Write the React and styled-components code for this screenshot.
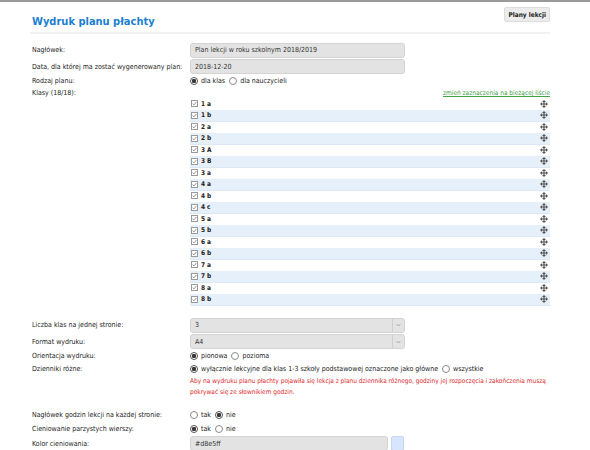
import React from 'react';
import styled, { createGlobalStyle } from 'styled-components';

const GlobalStyle = createGlobalStyle`
  html, body {
    margin: 0;
    padding: 0;
    background: #fff;
  }
  body {
    border-top: 2px solid #9a9a9a;
    font-family: "DejaVu Sans Condensed", "DejaVu Sans", sans-serif;
    font-size: 7px;
    color: #222;
  }
`;

const Page = styled.div`
  width: 520px;
  padding: 0 0 0 30px;
  box-sizing: content-box;
`;

const Header = styled.div`
  display: flex;
  justify-content: space-between;
  align-items: flex-start;
  height: 30px;
  border-bottom: 2px solid #f1f1f1;
  padding: 0 0 0 2px;
`;

const Title = styled.h1`
  margin: 13px 0 0;
  font-size: 11px;
  font-weight: bold;
  color: #1b7fd2;
`;

const TopButton = styled.button`
  margin-top: 5px;
  height: 15px;
  padding: 0 3px;
  background: #ececec;
  border: 1px solid #dcdcdc;
  border-radius: 2px;
  font-family: inherit;
  font-size: 6.5px;
  font-weight: bold;
  color: #222;
`;

const Form = styled.div`
  padding: 8px 0 0 2px;
`;

const Row = styled.div`
  display: grid;
  grid-template-columns: 158px 1fr;
  align-items: ${p => (p.top ? 'start' : 'center')};
  height: ${p => p.h}px;
  margin-top: ${p => p.mt || 0}px;
`;

const Label = styled.div`
  font-size: 7px;
  line-height: ${p => p.lh || 12}px;
`;

const Field = styled.div`
  display: flex;
  align-items: center;
  gap: 3px;
`;

const TextInput = styled.div`
  box-sizing: border-box;
  width: ${p => p.w || 215}px;
  height: 15px;
  padding: 0 4px;
  display: flex;
  align-items: center;
  background: #e3e3e3;
  border: 1px solid #d3d3d3;
  border-radius: 3px;
  font-size: 7px;
  color: #333;
`;

const Select = styled(TextInput)`
  padding-right: 0;
  justify-content: space-between;
`;

const SelectArrow = styled.div`
  width: 11px;
  height: 100%;
  border-left: 1px solid #cfcfcf;
  display: flex;
  align-items: center;
  justify-content: center;
`;

const Swatch = styled.div`
  width: 13px;
  height: 15px;
  box-sizing: border-box;
  background: #d8e5ff;
  border: 1px solid #c9d5ea;
  border-radius: 2px;
`;

const Radios = styled.div`
  display: flex;
  align-items: center;
  gap: 3px;
  height: ${p => p.h || 'auto'};
  font-size: 7px;
`;

const RadioItem = styled.span`
  display: inline-flex;
  align-items: center;
  gap: 3px;
  margin-right: 1px;
`;

const RadioDot = styled.span`
  box-sizing: border-box;
  width: 8px;
  height: 8px;
  border-radius: 50%;
  border: 1px solid ${p => (p.checked ? '#555' : '#8a8a8a')};
  background: ${p => (p.checked ? 'radial-gradient(circle, #3a3a3a 0 2px, #fff 2.4px)' : '#fff')};
`;

const ClassBox = styled.div`
  display: flex;
  flex-direction: column;
`;

const LinkLine = styled.div`
  height: 11px;
  display: flex;
  justify-content: flex-end;
  align-items: center;
`;

const GreenLink = styled.a`
  color: #43a047;
  text-decoration: underline;
  font-size: 6.5px;
`;

const ClassRow = styled.div`
  box-sizing: border-box;
  height: 11.5px;
  display: flex;
  align-items: center;
  justify-content: space-between;
  padding: 0 2px 0 1px;
  background: ${p => (p.odd ? '#e6f0fa' : '#fff')};
  border-bottom: 1px solid ${p => (p.odd ? '#dce8f5' : '#fff')};
  font-weight: bold;
  font-size: 6.5px;
`;

const ClassName = styled.span`
  display: flex;
  align-items: center;
  gap: 3px;
`;

const RedNote = styled.div`
  color: #e0262b;
  font-size: 6.5px;
  line-height: 11px;
  margin-top: 1px;
`;

const Radio = ({ checked, children }) => (
  <RadioItem>
    <RadioDot checked={checked} />
    {children}
  </RadioItem>
);

const CheckIcon = () => (
  <svg width="7" height="7" viewBox="0 0 7 7">
    <rect x="0.5" y="0.5" width="6" height="6" fill="#fff" stroke="#9a9a9a" />
    <path d="M1.6 3.6 L2.9 4.9 L5.4 2" fill="none" stroke="#7a7a7a" strokeWidth="0.8" />
  </svg>
);

const MoveIcon = () => (
  <svg width="8" height="8" viewBox="0 0 16 16">
    <path
      fill="#555"
      d="M8 0 L12 4.2 H9.2 V6.8 H11.8 V4 L16 8 L11.8 12 V9.2 H9.2 V11.8 H12 L8 16 L4 11.8 H6.8 V9.2 H4.2 V12 L0 8 L4.2 4 V6.8 H6.8 V4.2 H4 Z"
    />
  </svg>
);

const Chevron = () => (
  <svg width="5" height="4" viewBox="0 0 5 4">
    <path d="M0.6 1 L2.5 3 L4.4 1" fill="none" stroke="#999" strokeWidth="0.8" />
  </svg>
);

const classes = [
  '1 a', '1 b', '2 a', '2 b', '3 A', '3 B', '3 a', '4 a', '4 b',
  '4 c', '5 a', '5 b', '6 a', '6 b', '7 a', '7 b', '8 a', '8 b',
];

export default function App() {
  return (
    <>
      <GlobalStyle />
      <Page>
        <Header>
          <Title>Wydruk planu płachty</Title>
          <TopButton>Plany lekcji</TopButton>
        </Header>
        <Form>
          <Row h={16.5}>
            <Label>Nagłówek:</Label>
            <TextInput>Plan lekcji w roku szkolnym 2018/2019</TextInput>
          </Row>
          <Row h={16}>
            <Label>Data, dla której ma zostać wygenerowany plan:</Label>
            <TextInput>2018-12-20</TextInput>
          </Row>
          <Row h={13}>
            <Label>Rodzaj planu:</Label>
            <Radios>
              <Radio checked>dla klas</Radio>
              <Radio>dla nauczycieli</Radio>
            </Radios>
          </Row>
          <Row top h={218}>
            <Label lh={11}>Klasy (18/18):</Label>
            <ClassBox>
              <LinkLine>
                <GreenLink href="#">zmień zaznaczenia na bieżącej liście</GreenLink>
              </LinkLine>
              {classes.map((c, i) => (
                <ClassRow key={c + i} odd={i % 2 === 1}>
                  <ClassName>
                    <CheckIcon />
                    {c}
                  </ClassName>
                  <MoveIcon />
                </ClassRow>
              ))}
            </ClassBox>
          </Row>
          <Row h={17} mt={11}>
            <Label>Liczba klas na jednej stronie:</Label>
            <Select>
              3
              <SelectArrow><Chevron /></SelectArrow>
            </Select>
          </Row>
          <Row h={16}>
            <Label>Format wydruku:</Label>
            <Select>
              A4
              <SelectArrow><Chevron /></SelectArrow>
            </Select>
          </Row>
          <Row h={13}>
            <Label>Orientacja wydruku:</Label>
            <Radios>
              <Radio checked>pionowa</Radio>
              <Radio>pozioma</Radio>
            </Radios>
          </Row>
          <Row top h={45}>
            <Label>Dzienniki różne:</Label>
            <div>
              <Radios h="12px">
                <Radio checked>wyłącznie lekcyjne dla klas 1-3 szkoły podstawowej oznaczone jako główne</Radio>
                <Radio>wszystkie</Radio>
              </Radios>
              <RedNote>
                Aby na wydruku planu płachty pojawiła się lekcja z planu dziennika różnego, godziny jej rozpoczęcia i zakończenia muszą
                <br />
                pokrywać się ze słownikiem godzin.
              </RedNote>
            </div>
          </Row>
          <Row h={14}>
            <Label>Nagłówek godzin lekcji na każdej stronie:</Label>
            <Radios>
              <Radio>tak</Radio>
              <Radio checked>nie</Radio>
            </Radios>
          </Row>
          <Row h={14}>
            <Label>Cieniowanie parzystych wierszy:</Label>
            <Radios>
              <Radio checked>tak</Radio>
              <Radio>nie</Radio>
            </Radios>
          </Row>
          <Row h={16}>
            <Label>Kolor cieniowania:</Label>
            <Field>
              <TextInput w={198}>#d8e5ff</TextInput>
              <Swatch />
            </Field>
          </Row>
        </Form>
      </Page>
    </>
  );
}
